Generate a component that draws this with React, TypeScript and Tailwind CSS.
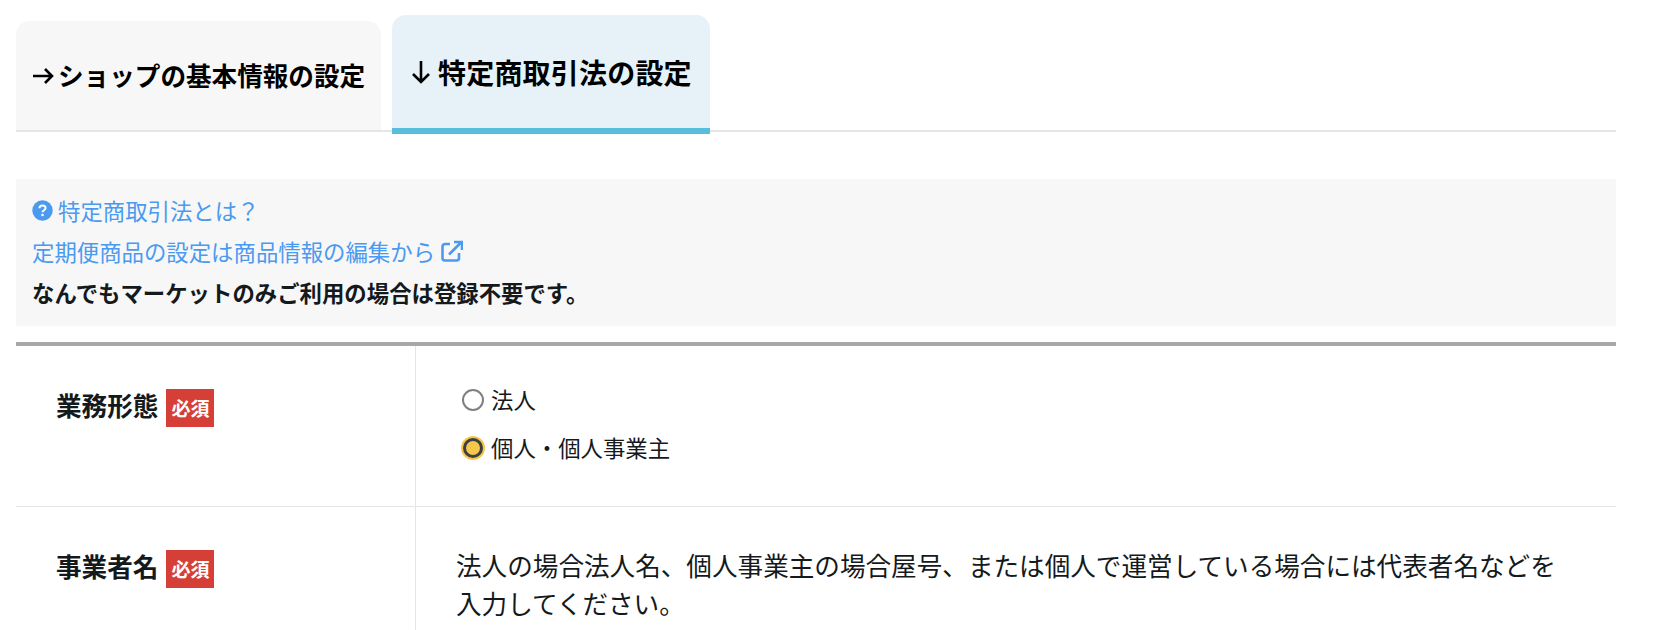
import React from 'react';

const ArrowRightIcon = () => (
  <svg className="mr-[4px] h-[22px] w-[22px]" viewBox="0 0 22 22" fill="none" stroke="currentColor" strokeWidth="2.6">
    <path d="M1 11h19M13 4l7 7-7 7" />
  </svg>
);

const ArrowDownIcon = () => (
  <svg className="mr-[6px] h-[24px] w-[22px]" viewBox="0 0 22 24" fill="none" stroke="currentColor" strokeWidth="2.6">
    <path d="M11 1v21M3 14l8 8 8-8" />
  </svg>
);

const QuestionIcon = () => (
  <svg className="mr-[5px] h-[21px] w-[21px]" viewBox="0 0 21 21">
    <circle cx="10.5" cy="10.5" r="10.2" fill="currentColor" />
    <path d="M7.4 8.2c.1-1.8 1.4-2.7 3.1-2.7 1.8 0 3.1 1 3.1 2.5 0 2.200-3.100 2.200-3.100 4.200" fill="none" stroke="#fff" strokeWidth="2" />
    <circle cx="10.500" cy="15" r="1.300" fill="#fff" />
  </svg>
);

const LinkIcon = () => (
  <svg className="ml-[6px] h-[22px] w-[22px]" viewBox="0 0 22 22" fill="none" stroke="currentColor" strokeWidth="2.600">
    <path d="M9 4H4a2.500 2.500 0 0 0-2.500 2.500V18A2.500 2.500 0 0 0 4 20.500h11.500A2.500 2.500 0 0 0 18 18v-5" />
    <path d="M8 14.500 20 2.500M13 2h8v8" />
  </svg>
);

const RequiredBadge = () => (
  <span className="ml-2 flex h-[38px] w-[48px] items-center justify-center bg-[#d63f37] text-[19px] font-bold text-white">
    必須
  </span>
);

const Radio = ({ label, checked }: { label: string; checked?: boolean }) => (
  <label className="flex h-[24px] items-center">
    {checked ? (
      <span className="ml-[5px] h-[20px] w-[20px] rounded-full border-[3px] border-[#3d3f44] bg-[#f5c84c] shadow-[0_0_0_2px_#f5c84c]" />
    ) : (
      <span className="ml-[4px] h-[22px] w-[22px] rounded-full border-2 border-[#808080] bg-white" />
    )}
    <span className={`${checked ? 'ml-[8px]' : 'ml-[7px]'} text-[22.4px] text-[#14191c]`}>{label}</span>
  </label>
);

export default function App() {
  return (
    <div className="h-[630px] w-[1678px] overflow-hidden bg-white pl-[16px] font-['Noto_Sans_CJK_JP','Noto_Sans',sans-serif] text-[#14191c]">
      <div className="w-[1600px]">
        <div className="flex h-[134px] items-end gap-[11px] pt-[15px]">
          <div className="mb-[4px] flex h-[109px] w-[365px] items-center rounded-t-[14px] bg-[#f7f7f7] pl-[16px] text-[25.6px] font-bold text-black">
            <ArrowRightIcon />
            <span>ショップの基本情報の設定</span>
          </div>
          <div className="flex h-[119px] w-[318px] items-center rounded-t-[14px] border-b-[6px] border-[#59bedb] bg-[#e6f2f7] pl-[18px] text-[28px] font-bold tracking-[0.2px] text-black">
            <ArrowDownIcon />
            <span>特定商取引法の設定</span>
          </div>
        </div>
        <div className="-mt-[4px] h-[2px] bg-[#e6e6e6]" />

        <div className="mt-[47px] flex h-[147px] flex-col justify-center gap-[8px] bg-[#f7f7f7] pb-[3px] pl-[16px] text-[22.4px] leading-[33px]">
          <div className="flex items-center text-[#4a9af0]">
            <QuestionIcon />
            <span>特定商取引法とは？</span>
          </div>
          <div className="flex items-center text-[#4a9af0]">
            <span>定期便商品の設定は商品情報の編集から</span>
            <LinkIcon />
          </div>
          <div className="font-bold text-[#14191c]">なんでもマーケットのみご利用の場合は登録不要です。</div>
        </div>

        <div className="mt-[16px] border-t-4 border-[#a8a8a8]">
          <div className="flex h-[161px] border-b border-[#e3e5e8]">
            <div className="flex w-[400px] items-start border-r border-[#e3e5e8] pl-[40px] pt-[43px]">
              <span className="mt-[1px] text-[25.6px] leading-[30px] font-bold">業務形態</span>
              <RequiredBadge />
            </div>
            <div className="flex flex-col gap-[24px] pl-[42px] pt-[42px]">
              <Radio label="法人" />
              <Radio label="個人・個人事業主" checked />
            </div>
          </div>
          <div className="flex h-[130px]">
            <div className="flex w-[400px] items-start border-r border-[#e3e5e8] pl-[40px] pt-[43px]">
              <span className="mt-[1px] text-[25.6px] leading-[30px] font-bold">事業者名</span>
              <RequiredBadge />
            </div>
            <div className="w-[1150px] pl-[40px] pt-[39px] text-[25.6px] leading-[38px]">
              法人の場合法人名、個人事業主の場合屋号、または個人で運営している場合には代表者名などを入力してください。
            </div>
          </div>
        </div>
      </div>
    </div>
  );
}
